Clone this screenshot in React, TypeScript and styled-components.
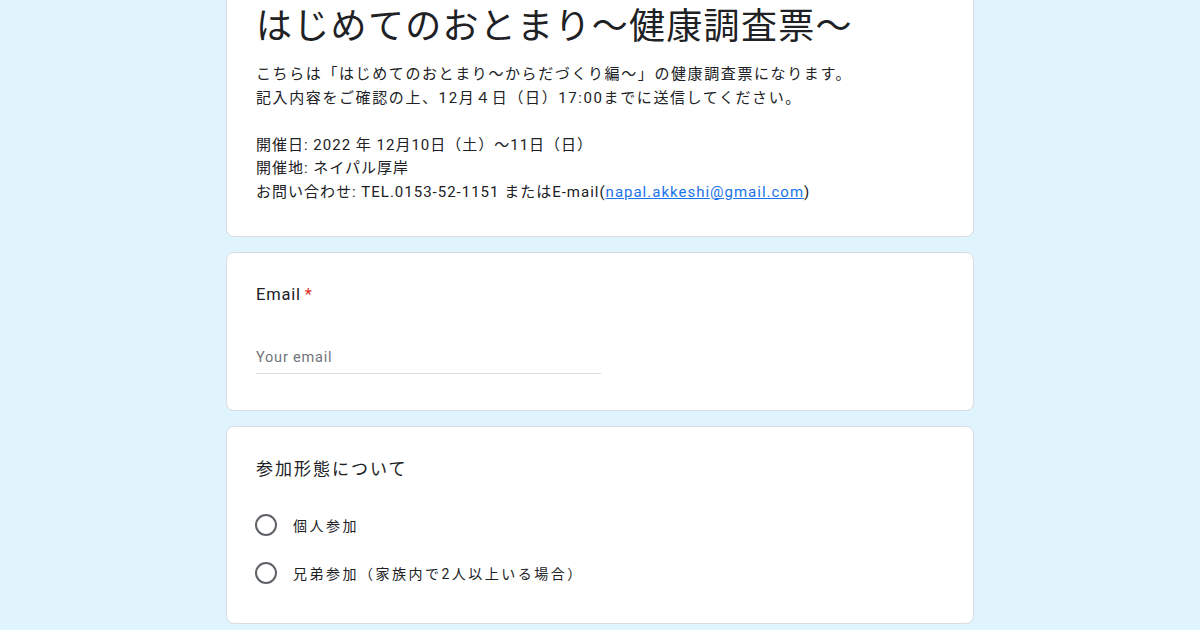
import React from 'react';
import styled, { createGlobalStyle } from 'styled-components';

const GlobalStyle = createGlobalStyle`
  html, body {
    margin: 0;
    padding: 0;
    background: #dff4fc;
  }
  body {
    font-family: Roboto, "Noto Sans CJK JP", sans-serif;
    color: #202124;
    overflow: hidden;
  }
`;

const Page = styled.main`
  width: 748px;
  margin: -26px auto 0;
  display: flex;
  flex-direction: column;
  gap: 15px;
`;

const Card = styled.section<{ $pad: string }>`
  box-sizing: border-box;
  background: #fff;
  border: 1px solid #dadce0;
  border-radius: 8px;
  padding: ${(p) => p.$pad};
`;

const Title = styled.h1`
  margin: 0;
  font-family: "Noto Sans CJK JP", sans-serif;
  font-size: 36px;
  font-weight: 400;
  line-height: 48px;
  letter-spacing: 1.3px;
  color: #202124;
`;

const Description = styled.div`
  margin-top: 16px;
  font-size: 15px;
  line-height: 23.5px;
  color: #202124;

  a {
    color: #1a73e8;
  }
`;

const Line = styled.p<{ $wide?: boolean }>`
  margin: 0;
  white-space: nowrap;
  letter-spacing: ${(p) => (p.$wide ? 1.6 : 1)}px;
`;

const Label = styled.div<{ $size: number; $spacing: number }>`
  font-size: ${(p) => p.$size}px;
  line-height: 24px;
  letter-spacing: ${(p) => p.$spacing}px;
  color: #202124;
`;

const Required = styled.span`
  color: #d93025;
  margin-left: 4px;
`;

const Input = styled.input`
  display: block;
  box-sizing: border-box;
  width: 345px;
  height: 32px;
  margin-top: 35px;
  padding: 0;
  border: 0;
  border-bottom: 1px solid #dadce0;
  font-family: Roboto, sans-serif;
  font-size: 14.5px;
  letter-spacing: 0.8px;
  color: #202124;
  outline: none;

  &::placeholder {
    color: #70757a;
  }
`;

const Options = styled.div`
  margin-top: 20px;
  display: flex;
  flex-direction: column;
`;

const Option = styled.label`
  display: flex;
  align-items: center;
  height: 48px;
  gap: 16px;
  font-size: 14px;
  letter-spacing: 2.5px;
  color: #202124;
`;

const Radio = styled.span`
  box-sizing: border-box;
  width: 22px;
  height: 22px;
  margin-left: -1px;
  border: 2px solid #5f6368;
  border-radius: 50%;
`;

const options = ['個人参加', '兄弟参加（家族内で2人以上いる場合）'];

export default function App() {
  return (
    <>
      <GlobalStyle />
      <Page>
        <Card $pad="24px 29px 32px">
          <Title>はじめてのおとまり～健康調査票～</Title>
          <Description>
            <Line $wide>こちらは「はじめてのおとまり～からだづくり編～」の健康調査票になります。</Line>
            <Line $wide>記入内容をご確認の上、12月４日（日）17:00までに送信してください。</Line>
            <Line>&nbsp;</Line>
            <Line>開催日: 2022 年 12月10日（土）～11日（日）</Line>
            <Line>開催地: ネイパル厚岸</Line>
            <Line>
              お問い合わせ: TEL.0153-52-1151 またはE-mail(<a href="#">napal.akkeshi@gmail.com</a>)
            </Line>
          </Description>
        </Card>
        <Card $pad="30px 29px 36px">
          <Label $size={16.5} $spacing={0.8}>
            Email<Required>*</Required>
          </Label>
          <Input placeholder="Your email" />
        </Card>
        <Card $pad="30px 29px 26px">
          <Label $size={17} $spacing={2}>参加形態について</Label>
          <Options>
            {options.map((o) => (
              <Option key={o}>
                <Radio />
                {o}
              </Option>
            ))}
          </Options>
        </Card>
      </Page>
    </>
  );
}
